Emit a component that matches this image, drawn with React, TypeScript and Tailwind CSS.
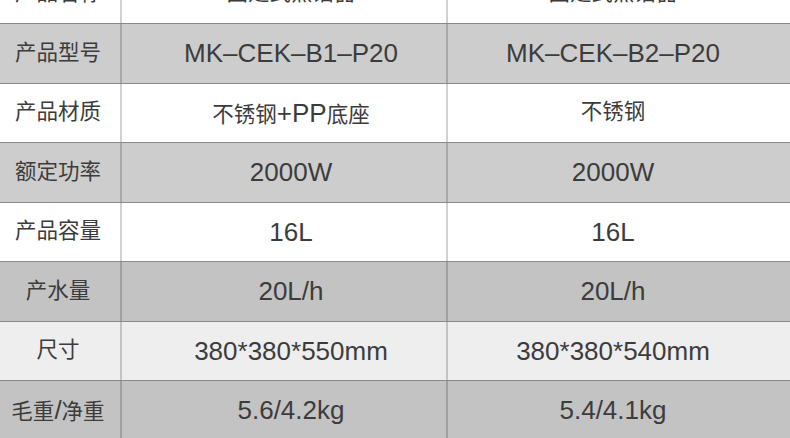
const rows: { label: string; a: string; b: string; bg: string }[] = [
  { label: '产品名称', a: '固定式蒸馏器', b: '固定式蒸馏器', bg: 'bg-white' },
  { label: '产品型号', a: 'MK–CEK–B1–P20', b: 'MK–CEK–B2–P20', bg: 'bg-[#cdcdcd]' },
  { label: '产品材质', a: '不锈钢+PP底座', b: '不锈钢', bg: 'bg-white' },
  { label: '额定功率', a: '2000W', b: '2000W', bg: 'bg-[#cdcdcd]' },
  { label: '产品容量', a: '16L', b: '16L', bg: 'bg-white' },
  { label: '产水量', a: '20L/h', b: '20L/h', bg: 'bg-[#c3c3c3]' },
  { label: '尺寸', a: '380*380*550mm', b: '380*380*540mm', bg: 'bg-[#eeeeee]' },
  { label: '毛重/净重', a: '5.6/4.2kg', b: '5.4/4.1kg', bg: 'bg-[#c3c3c3]' },
];

// CJK runs and latin runs use different sizes, like the original spec sheet
function Mixed({ text }: { text: string }) {
  const parts = text.match(/[\u4e00-\u9fff]+|[^\u4e00-\u9fff]+/g) ?? [];
  return (
    <span className="whitespace-nowrap">
      {parts.map((p, i) =>
        /[\u4e00-\u9fff]/.test(p) ? (
          <span key={i} className="text-[21.5px]">{p}</span>
        ) : (
          <span key={i} className="text-[26px]">{p}</span>
        )
      )}
    </span>
  );
}

export default function App() {
  return (
    <div className="w-[790px] h-[438px] overflow-hidden bg-white font-['Liberation_Sans','Noto_Sans_CJK_SC',sans-serif] text-[#3c3c3c]">
      <div className="-mt-[36.5px]">
        {rows.map((r, i) => (
          <div
            key={r.label}
            className={`grid grid-cols-[120px_326px_1fr] h-[59.5px] ${r.bg} ${i > 0 ? 'border-t border-[#8a8a8a]' : ''}`}
          >
            <div className="flex items-center justify-center pr-[4px] leading-none">
              <Mixed text={r.label} />
            </div>
            <div className="flex items-center justify-center pl-[14px] border-l-2 border-black/[0.18] leading-none">
              <Mixed text={r.a} />
            </div>
            <div className="flex items-center justify-center pr-[12px] border-l-2 border-black/[0.18] leading-none">
              <Mixed text={r.b} />
            </div>
          </div>
        ))}
      </div>
    </div>
  );
}
